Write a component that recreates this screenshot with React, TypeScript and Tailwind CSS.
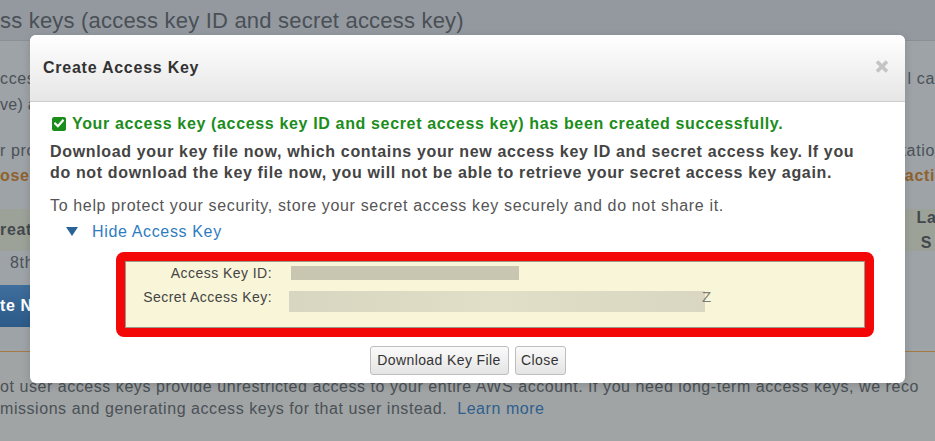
import React from "react";

const F = { fontFamily: '"Liberation Sans", Arial, sans-serif' };

function CheckIcon() {
  return (
    <span className="flex h-[14px] w-[14px] items-center justify-center rounded-[2px] bg-[#1b8d1b]">
      <svg width="10" height="9" viewBox="0 0 10 9">
        <path d="M1.2 4.6 L3.9 7.2 L8.8 1.6" fill="none" stroke="#fff" strokeWidth="2.2" strokeLinecap="square" />
      </svg>
    </span>
  );
}

function CloseX() {
  return (
    <svg width="14" height="13" viewBox="0 0 14 13">
      <path d="M2 1.5 L12 11.5 M12 1.5 L2 11.5" stroke="#c4c4c4" strokeWidth="3.6" strokeLinecap="butt" />
    </svg>
  );
}

export default function App() {
  return (
    <div style={F} className="relative h-[441px] w-[935px] overflow-hidden bg-[#9ea3a8] text-[16px] tracking-[0.65px] text-[#4b5157]">
      {/* Background page */}
      <div className="flex h-[41px] items-center whitespace-nowrap border-b border-[#8a9096] bg-[#93999f] text-[22px] tracking-[0.2px] text-[#4a5056]">
        <span>ss keys (access key ID and secret access key)</span>
      </div>
      <div className="h-[27px]" />
      <div className="flex h-[22px] items-center justify-between whitespace-nowrap">
        <span>ccess</span>
        <span>l ca</span>
      </div>
      <div className="mt-[4px] flex h-[22px] items-center justify-between whitespace-nowrap tracking-[0.3px]">
        <span>ve) a</span>
        <span />
      </div>
      <div className="mt-[24px] flex h-[22px] items-center justify-between whitespace-nowrap">
        <span>r pro</span>
        <span>tatio</span>
      </div>
      <div className="mt-[3px] flex h-[22px] items-center justify-between whitespace-nowrap font-bold text-[#8f612c]">
        <span>ose</span>
        <span>acti</span>
      </div>
      <div className="mt-[22px] flex h-[42px] items-center justify-between whitespace-nowrap bg-[#9ca298] font-bold text-[#43484d]">
        <span>reat</span>
        <div className="flex w-[17px] flex-col items-center leading-[25px]">
          <span>La</span>
          <span>S</span>
        </div>
      </div>
      <div className="mt-[1px] flex h-[22px] items-center whitespace-nowrap">
        <span className="ml-[10px]">8th</span>
      </div>
      <div className="mt-[11px] flex h-[42px] w-[30px] items-center whitespace-nowrap bg-gradient-to-b from-[#3f6e9c] to-[#2c5a88] font-bold text-white">
        <span>te N</span>
      </div>
      <div className="mt-[24px] h-[1px] bg-[#a57a45]" />
      <div className="bg-[#a0a4a4] tracking-[0.55px]">
        <div className="h-[24px]" />
        <div className="flex h-[22px] items-center whitespace-nowrap">
          <span>ot user access keys provide unrestricted access to your entire AWS account. If you need long-term access keys, we reco</span>
        </div>
        <div className="flex h-[22px] items-center whitespace-nowrap">
          <span>missions and generating access keys for that user instead.&nbsp; <span className="text-[#2f5e8f]">Learn more</span></span>
        </div>
        <div className="h-[40px]" />
      </div>

      {/* Modal */}
      <div className="absolute left-[30px] top-[35px] flex h-[348px] w-[875px] flex-col overflow-hidden rounded-[6px] bg-white shadow-[0_2px_8px_rgba(0,0,0,0.15)]">
        <div className="flex h-[67px] shrink-0 items-center justify-between border-b border-[#cdcdcd] bg-gradient-to-b from-white to-[#e6e6e6] pl-[13px] pr-[16px]">
          <span className="text-[16px] font-bold tracking-[0.75px] text-[#333]">Create Access Key</span>
          <span className="-mt-[4px]"><CloseX /></span>
        </div>
        <div className="flex flex-col pl-[20px] text-[16px] leading-[21px]">
          <div className="mt-[11px] flex items-center whitespace-nowrap font-bold text-[#1b8d1b]">
            <span className="ml-[2px] mr-[6px]"><CheckIcon /></span>
            <span>Your access key (access key ID and secret access key) has been created successfully.</span>
          </div>
          <div className="mt-[7px] whitespace-nowrap font-bold text-[#444]">
            <div>Download your key file now, which contains your new access key ID and secret access key. If you</div>
            <div>do not download the key file now, you will not be able to retrieve your secret access key again.</div>
          </div>
          <div className="mt-[12px] whitespace-nowrap text-[#555]">To help protect your security, store your secret access key securely and do not share it.</div>
          <div className="mt-[5px] flex items-center whitespace-nowrap">
            <svg className="ml-[16px] mr-[14px]" width="12" height="9" viewBox="0 0 12 9">
              <path d="M0 0 L12 0 L6 9 Z" fill="#2a6496" />
            </svg>
            <span className="text-[#2e7cbf]">Hide Access Key</span>
          </div>
        </div>
        <div className="ml-[86px] mt-[10px] w-[758px] rounded-[8px] border-[9px] border-[#f40707]">
          <div className="h-[67px] border border-[#9a9a8a] bg-[#f8f5d9] text-[14px] tracking-[0.45px] text-[#444]">
            <div className="grid grid-cols-[146px_1fr] gap-x-[17px]">
              <div className="flex h-[22px] items-center justify-end">Access Key ID:</div>
              <div className="h-[22px]">
                <div className="ml-[2px] mt-[4px] h-[14px] w-[228px] bg-[#c8c5b1]" />
              </div>
              <div className="mt-[2px] flex h-[22px] items-center justify-end">Secret Access Key:</div>
              <div className="mt-[2px] flex h-[22px]">
                <div className="mt-[5px] h-[21px] w-[416px] bg-gradient-to-r from-[#d8d5c0] via-[#e2dfc8] to-[#d9d6c1]" />
                <span className="-ml-[3px] mt-[3px] text-[15px] leading-[15px] text-[#7d7d74]">Z</span>
              </div>
            </div>
          </div>
        </div>
        <div className="mt-[9px] flex justify-center gap-[6px] text-[14px] tracking-[0.4px] text-[#333]">
          <button className="flex h-[29px] w-[139px] items-center justify-center rounded-[3px] border border-[#bdbdbd] bg-gradient-to-b from-[#fafafa] to-[#e4e4e4]">Download Key File</button>
          <button className="flex h-[29px] w-[51px] items-center justify-center rounded-[3px] border border-[#bdbdbd] bg-gradient-to-b from-[#fafafa] to-[#e4e4e4]">Close</button>
        </div>
      </div>
    </div>
  );
}
